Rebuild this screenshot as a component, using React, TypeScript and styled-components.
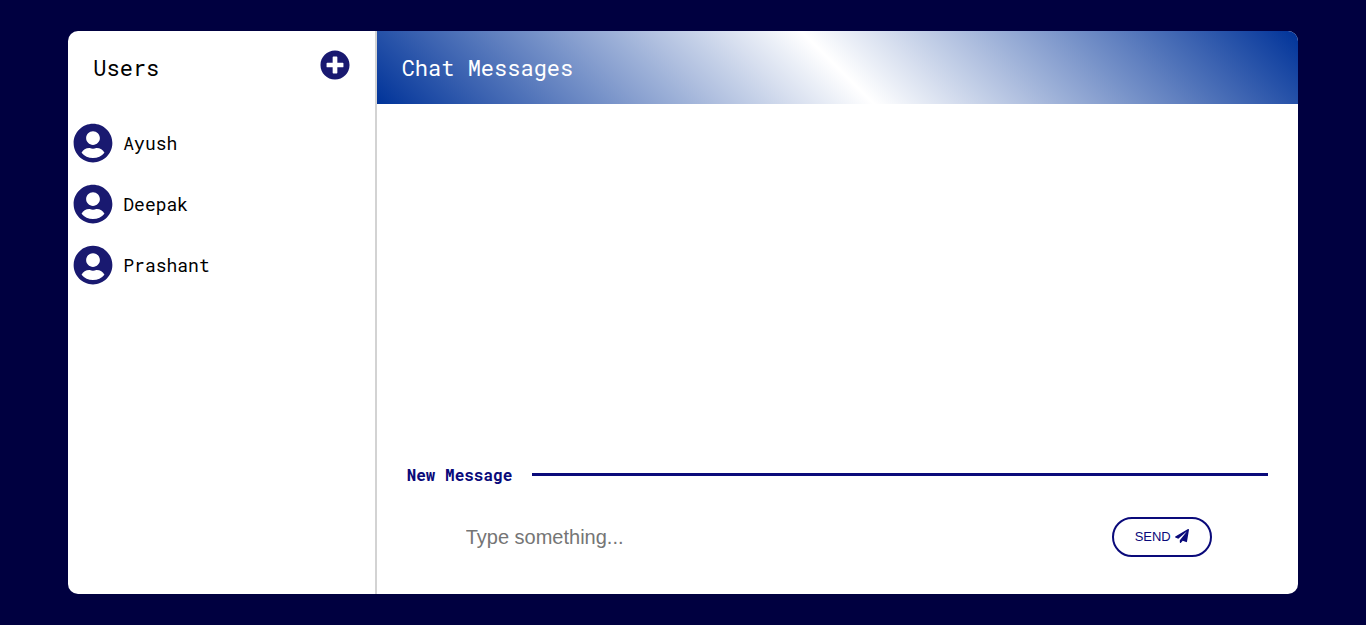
import React, { useState } from "react";
import styled, { createGlobalStyle } from "styled-components";
import { FaPaperPlane, FaPlusCircle, FaUserCircle } from "react-icons/fa";

const GlobalStyle = createGlobalStyle`
  *, *::before, *::after {
    box-sizing: border-box;
  }
  body {
    margin: 0;
    background: #000040;
    font-family: "Roboto Mono", "DejaVu Sans Mono", monospace;
  }
`;

const Page = styled.div`
  display: flex;
  align-items: center;
  justify-content: center;
  min-height: 100vh;
`;

const Card = styled.div`
  display: flex;
  width: 90%;
  min-height: 90vh;
  background: #fff;
  border-radius: 10px;
  overflow: hidden;
`;

const Sidebar = styled.aside`
  flex: 0 0 calc(25% - 1px);
`;

const SidebarHeader = styled.header`
  display: flex;
  align-items: center;
  justify-content: space-between;
  height: 73px;
  padding: 0 25px;
`;

const Title = styled.h1<{ $light?: boolean }>`
  margin: 0;
  font-size: 22px;
  line-height: 30px;
  font-weight: 400;
  color: ${(p) => (p.$light ? "#fff" : "#000")};
`;

const AddButton = styled.button`
  display: flex;
  margin: 0 0 6px;
  padding: 0;
  border: 0;
  background: none;
  color: #191970;
  font-size: 30px;
  cursor: pointer;
`;

const UserList = styled.ul`
  display: flex;
  flex-direction: column;
  gap: 21px;
  margin: 0;
  padding: 19px 5px;
  list-style: none;
`;

const UserRow = styled.li`
  display: flex;
  align-items: center;
  gap: 10px;
  height: 40px;
  font-size: 18px;
  line-height: 24px;

  svg {
    flex: none;
    font-size: 40px;
    color: #191970;
  }
`;

const Main = styled.main`
  display: flex;
  flex: 1;
  flex-direction: column;
  min-width: 0;
  border-left: 2px solid #d3d3d3;
`;

const MainHeader = styled.header`
  display: flex;
  align-items: center;
  height: 73px;
  padding: 0 25px;
  background: linear-gradient(45deg, #003399, #fff, #003399);
`;

const Messages = styled.section`
  flex: 1;
`;

const Composer = styled.form`
  padding: 0 30px 37px;
`;

const ComposerHeading = styled.div`
  display: flex;
  align-items: center;
  gap: 20px;
`;

const ComposerLabel = styled.label`
  font-size: 16px;
  line-height: 22px;
  font-weight: 700;
  color: #0a0a7a;
`;

const Rule = styled.hr`
  flex: 1;
  height: 3px;
  margin: 0;
  border: 0;
  background: #0a0a7a;
`;

const ComposerRow = styled.div`
  display: flex;
  align-items: center;
  gap: 20px;
  margin-top: 31px;
  padding: 0 56px 0 59px;
`;

const MessageInput = styled.input`
  flex: 1;
  min-width: 0;
  height: 40px;
  padding: 2px 0 0;
  border: 0;
  outline: 0;
  font-family: "Liberation Sans", Arial, sans-serif;
  font-size: 20px;

  &::placeholder {
    color: #757575;
  }
`;

const SendButton = styled.button`
  display: flex;
  align-items: center;
  justify-content: center;
  gap: 4px;
  width: 100px;
  height: 40px;
  padding: 0;
  border: 2px solid #0a0a7a;
  border-radius: 20px;
  background: #fff;
  color: #0a0a7a;
  font-family: "Liberation Sans", Arial, sans-serif;
  font-size: 13px;
  cursor: pointer;

  svg {
    margin-bottom: 2px;
    font-size: 14px;
  }
`;

const users = ["Ayush", "Deepak", "Prashant"];

export default function App() {
  const [message, setMessage] = useState("");

  return (
    <>
      <GlobalStyle />
      <Page>
        <Card>
          <Sidebar>
            <SidebarHeader>
              <Title>Users</Title>
              <AddButton type="button" aria-label="Add user">
                <FaPlusCircle />
              </AddButton>
            </SidebarHeader>
            <UserList>
              {users.map((name) => (
                <UserRow key={name}>
                  <FaUserCircle aria-hidden="true" />
                  <span>{name}</span>
                </UserRow>
              ))}
            </UserList>
          </Sidebar>
          <Main>
            <MainHeader>
              <Title as="h2" $light>
                Chat Messages
              </Title>
            </MainHeader>
            <Messages aria-label="Messages" />
            <Composer onSubmit={(e) => e.preventDefault()}>
              <ComposerHeading>
                <ComposerLabel htmlFor="message">New Message</ComposerLabel>
                <Rule />
              </ComposerHeading>
              <ComposerRow>
                <MessageInput
                  id="message"
                  type="text"
                  placeholder="Type something..."
                  value={message}
                  onChange={(e) => setMessage(e.target.value)}
                />
                <SendButton type="submit">
                  SEND
                  <FaPaperPlane aria-hidden="true" />
                </SendButton>
              </ComposerRow>
            </Composer>
          </Main>
        </Card>
      </Page>
    </>
  );
}
